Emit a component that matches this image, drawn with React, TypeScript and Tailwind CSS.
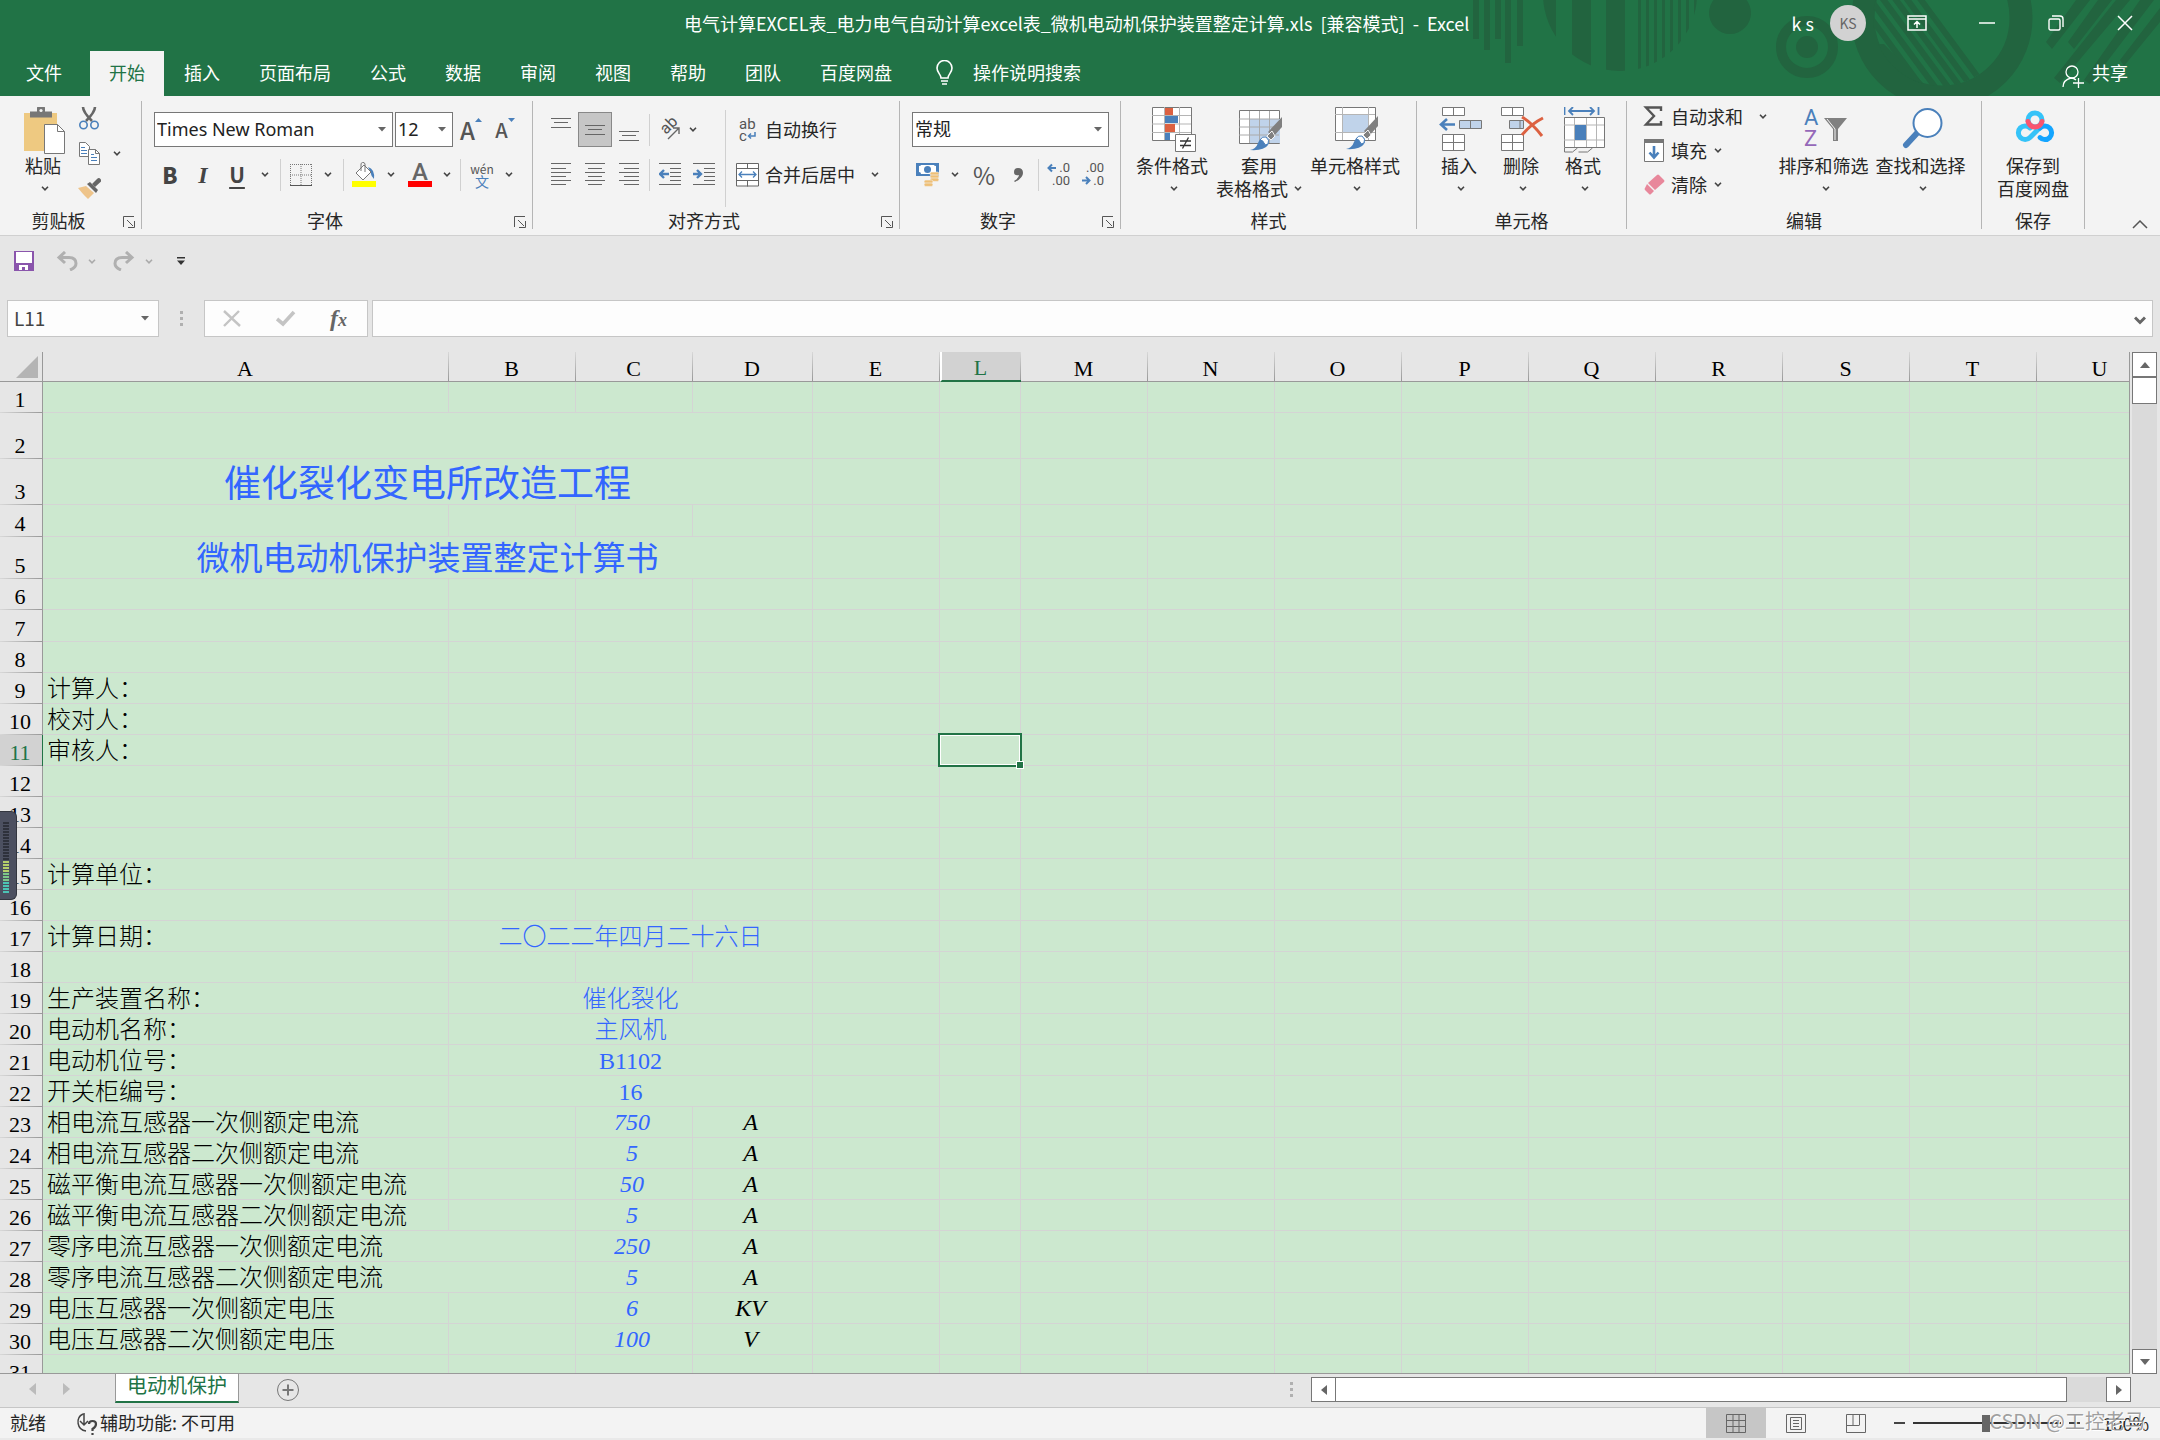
import type { ReactNode } from "react";
import clsx from "clsx";

type Cell = { span?: number; text?: string; className?: string };
type Row = { n: number; h: string; cells?: Cell[] };

const COLUMNS = [
  { name: "A", w: "w-[406px]" },
  { name: "B", w: "w-[127px]" },
  { name: "C", w: "w-[117px]" },
  { name: "D", w: "w-[120px]" },
  { name: "E", w: "w-[127px]" },
  { name: "L", w: "w-[81px]" },
  { name: "M", w: "w-[127px]" },
  { name: "N", w: "w-[127px]" },
  { name: "O", w: "w-[127px]" },
  { name: "P", w: "w-[127px]" },
  { name: "Q", w: "w-[127px]" },
  { name: "R", w: "w-[127px]" },
  { name: "S", w: "w-[127px]" },
  { name: "T", w: "w-[127px]" },
  { name: "U", w: "w-[127px]" },
];

const LABEL = "pl-1 pt-[2px] text-[24px]";
const MERGED = "pt-[2px] text-center text-[24px] text-[#3366ff]";
const VALUE = "pr-1 text-center text-[24px] text-[#3366ff] italic";
const UNIT = "pr-1 text-center text-[24px] italic";

const label = (text: string): Cell[] => [{ text, className: LABEL }];
const merged = (text: string, value: string): Cell[] => [
  { text, className: LABEL },
  { span: 3, text: value, className: MERGED },
];
const measure = (text: string, value: string, unit: string): Cell[] => [
  { text, className: LABEL },
  {},
  { text: value, className: VALUE },
  { text: unit, className: UNIT },
];
const measureWide = (text: string, value: string, unit: string): Cell[] => [
  { text, span: 2, className: LABEL },
  { text: value, className: VALUE },
  { text: unit, className: UNIT },
];

const ROWS: Row[] = [
  { n: 1, h: "h-[31px]" },
  { n: 2, h: "h-[46px]", cells: [{ span: 4 }] },
  {
    n: 3,
    h: "h-[46px]",
    cells: [
      {
        span: 4,
        text: "催化裂化变电所改造工程",
        className: "pt-[6px] text-center text-[37px] font-normal text-[#3366ff]",
      },
    ],
  },
  { n: 4, h: "h-[32px]" },
  {
    n: 5,
    h: "h-[42px]",
    cells: [
      {
        span: 4,
        text: "微机电动机保护装置整定计算书",
        className: "pt-[2px] text-center text-[33px] font-normal text-[#3366ff]",
      },
    ],
  },
  { n: 6, h: "h-[31px]" },
  { n: 7, h: "h-[32px]" },
  { n: 8, h: "h-[31px]" },
  { n: 9, h: "h-[31px]", cells: label("计算人：") },
  { n: 10, h: "h-[31px]", cells: label("校对人：") },
  { n: 11, h: "h-[31px]", cells: label("审核人：") },
  { n: 12, h: "h-[31px]" },
  { n: 13, h: "h-[31px]" },
  { n: 14, h: "h-[31px]" },
  { n: 15, h: "h-[31px]", cells: merged("计算单位：", "") },
  { n: 16, h: "h-[31px]" },
  { n: 17, h: "h-[31px]", cells: merged("计算日期：", "二〇二二年四月二十六日") },
  { n: 18, h: "h-[31px]" },
  { n: 19, h: "h-[31px]", cells: merged("生产装置名称：", "催化裂化") },
  { n: 20, h: "h-[31px]", cells: merged("电动机名称：", "主风机") },
  { n: 21, h: "h-[31px]", cells: merged("电动机位号：", "B1102") },
  { n: 22, h: "h-[31px]", cells: merged("开关柜编号：", "16") },
  { n: 23, h: "h-[31px]", cells: measure("相电流互感器一次侧额定电流", "750", "A") },
  { n: 24, h: "h-[31px]", cells: measure("相电流互感器二次侧额定电流", "5", "A") },
  { n: 25, h: "h-[31px]", cells: measure("磁平衡电流互感器一次侧额定电流", "50", "A") },
  { n: 26, h: "h-[31px]", cells: measure("磁平衡电流互感器二次侧额定电流", "5", "A") },
  { n: 27, h: "h-[31px]", cells: measureWide("零序电流互感器一次侧额定电流", "250", "A") },
  { n: 28, h: "h-[31px]", cells: measureWide("零序电流互感器二次侧额定电流", "5", "A") },
  { n: 29, h: "h-[31px]", cells: measure("电压互感器一次侧额定电压", "6", "KV") },
  { n: 30, h: "h-[31px]", cells: measure("电压互感器二次侧额定电压", "100", "V") },
  { n: 31, h: "h-[31px]" },
];

const TABS = ["文件", "开始", "插入", "页面布局", "公式", "数据", "审阅", "视图", "帮助", "团队", "百度网盘"];

function Chevron({ className = "text-[#444]" }: { className?: string }) {
  return (
    <svg width="8" height="5" viewBox="0 0 8 5" className={className} fill="none" stroke="currentColor" strokeWidth="1.6">
      <path d="M1 .8 4 3.8 7 .8" />
    </svg>
  );
}

function DropArrow() {
  return (
    <svg width="8" height="5" viewBox="0 0 8 5" fill="#666">
      <path d="M0 0h8L4 4.5z" />
    </svg>
  );
}

function ToolButton({ w, title, className, children }: { w: string; title: string; className?: string; children: ReactNode }) {
  return (
    <button type="button" aria-label={title} className={clsx("flex h-[35px] shrink-0 items-center justify-center", w, className)}>
      {children}
    </button>
  );
}

function Divider({ className = "mx-1" }: { className?: string }) {
  return <span className={clsx("h-8 w-px shrink-0 bg-[#d0d0d0]", className)} />;
}

function BigButton({ w, icon, lines, arrow = "below" }: { w: string; icon: ReactNode; lines: string[]; arrow?: "below" | "inline" | "none" }) {
  return (
    <button type="button" className={clsx("flex shrink-0 flex-col items-center leading-[23px] whitespace-nowrap", w)}>
      <span className="flex h-[47px] items-start justify-center pl-1">{icon}</span>
      {lines.map((line, i) => (
        <span key={line} className="flex items-center gap-[6px]">
          {line}
          {arrow === "inline" && i === lines.length - 1 && <Chevron />}
        </span>
      ))}
      {arrow === "below" && (
        <span className="flex h-[23px] items-center pl-1">
          <Chevron />
        </span>
      )}
    </button>
  );
}

function Group({ w, name, launcher, children }: { w: string; name: string; launcher?: boolean; children: ReactNode }) {
  return (
    <section className={clsx("flex shrink-0 flex-col border-r border-[#b5b5b5]", w)}>
      <div className="flex h-[110px]">{children}</div>
      <div className="flex h-[18px] items-center">
        <span className="flex-1 text-center leading-[18px]">{name}</span>
        {launcher && (
          <button type="button" aria-label={`${name}设置`} className="flex w-6 justify-center pt-1">
            <svg width="12" height="12" viewBox="0 0 12 12" fill="none" stroke="#555">
              <path d="M.5 11V.5H11M4 4l6 6M11.5 5v6.5H5" />
            </svg>
          </button>
        )}
      </div>
    </section>
  );
}

function SelectBox({ w, title, value }: { w: string; title: string; value: string }) {
  return (
    <div className={clsx("relative h-[35px] shrink-0", w)}>
      <select
        aria-label={title}
        defaultValue={value}
        className="h-full w-full appearance-none border border-[#777] bg-white pl-[2px] font-['Noto_Sans','Noto_Sans_CJK_SC',sans-serif] text-[18px] text-[#222]"
      >
        <option>{value}</option>
      </select>
      <span className="pointer-events-none absolute top-[15px] right-[7px]">
        <DropArrow />
      </span>
    </div>
  );
}

/* ---------- title bar artwork ---------- */

function HeaderArt() {
  return (
    <svg className="pointer-events-none absolute top-0 right-0" width="700" height="96" viewBox="1460 0 700 96" fill="#22643f">
      <defs>
        <clipPath id="disc">
          <circle cx="1620" cy="-6" r="77" />
        </clipPath>
        <clipPath id="lens">
          <circle cx="1941" cy="18" r="68" />
        </clipPath>
      </defs>
      <path d="M1473 0h6v39h-6zM1484 0h6v50h-6zM1495 0h6v39h-6zM1505 0h6v63h-6zM1517 0h6v46h-6z" />
      <path
        clipPath="url(#disc)"
        d="M1542 0h14v80h-14zM1572 0h19v80h-19zM1606 0h19v80h-19zM1638 0h3v80h-3zM1646 0h3v80h-3zM1654 0h3v80h-3zM1662 0h3v80h-3zM1670 0h3v80h-3zM1678 0h3v80h-3zM1686 0h3v80h-3zM1694 0h3v80h-3z"
      />
      <circle cx="1730" cy="13" r="21" />
      <circle cx="1807" cy="47" r="26" fill="none" stroke="#22643f" strokeWidth="10" />
      <circle cx="1807" cy="47" r="11" />
      <circle cx="1942" cy="18" r="79" fill="none" stroke="#22643f" strokeWidth="23" />
      <g clipPath="url(#lens)" stroke="#22643f" strokeWidth="6">
        <path d="M1862 6l78 106M1862-12l90 122M1866-24l96 130M1874-30l98 133M1884-32l98 133M1896-34l98 133" />
        <path d="M1870 44l14 0 50 50-30 6z" strokeWidth="0" />
      </g>
      <path d="M2046 42l30-42h14l-38 49zM2068 42l30-42h14l-38 49zM2054 78l62-78h14l-70 83zM2084 80l56-80h14l-64 84zM2120 60l40-52v14l-36 44z" />
    </svg>
  );
}

/* ---------- ribbon icons ---------- */

function PasteIcon() {
  return (
    <svg width="42" height="48" viewBox="0 0 42 48">
      <path d="M0 6h33v38H0z" fill="#eec981" />
      <path d="M6 5h7V2a4 4 0 0 1 8 0v3h7v6H6z" fill="#777" transform="translate(0 -.5)" />
      <circle cx="17" cy="3.500" r="1.600" fill="#f3f3f3" />
      <path d="M20.500 17.500h13l7 7v22h-20z" fill="#fff" stroke="#777" />
      <path d="M33.500 17.500v7h7" fill="none" stroke="#777" />
    </svg>
  );
}

function ScissorsIcon() {
  return (
    <svg width="20" height="23" viewBox="0 0 20 23" fill="none">
      <path d="M4 0c0 4 3 8 9 14M16 0c0 4-3 8-9 14" stroke="#666" strokeWidth="2.600" />
      <circle cx="4.500" cy="18" r="3.700" stroke="#4a80bb" strokeWidth="1.600" />
      <circle cx="15.500" cy="18" r="3.700" stroke="#4a80bb" strokeWidth="1.600" />
    </svg>
  );
}

function CopyIcon() {
  return (
    <svg width="21" height="23" viewBox="0 0 21 23" fill="#fff" stroke="#777">
      <path d="M.5.500h6l4 4v10H.500z" />
      <path d="M2 5.500h4M2 8.500h6M2 11.500h6" stroke="#4a80bb" />
      <path d="M9.500 7.500h7l4 4v11h-11z" />
      <path d="M16.500 7.500v4h4" fill="none" />
      <path d="M12 12.500h3M12 15.500h6M12 18.500h6" stroke="#4a80bb" />
    </svg>
  );
}

function PainterIcon() {
  return (
    <svg width="23" height="21" viewBox="0 0 23 21">
      <path d="M0 10l8-2 8 7-6 6C6 17 3 14 0 10z" fill="#eec48a" />
      <path d="M9 6l3-2 8 8-2 3z" fill="#666" />
      <path d="M14 6l5-5q2-2 3.500 0t0 3l-5.500 5z" fill="#666" />
    </svg>
  );
}

function BordersIcon() {
  return (
    <svg width="22" height="22" viewBox="0 0 22 22" fill="none" stroke="#777">
      <path d="M.5 0v21M21.500 0v21M0 .5h22M11 0v21M0 11h22" strokeDasharray="1 1" />
      <path d="M0 21.500h22" stroke="#555" />
    </svg>
  );
}

function FillIcon() {
  return (
    <svg width="24" height="25" viewBox="0 0 24 25" fill="none">
      <path d="M16 5q7 2 6 12-3-3-4-8z" fill="#4a80bb" />
      <path d="M4 11 12 3l7 7-8 8z" fill="#fff" stroke="#777" />
      <path d="M9 9V3a2 2 0 0 1 4-1v8" stroke="#777" />
      <path d="M0 19h24v6H0z" fill="#ff0" />
    </svg>
  );
}

function LinesIcon({ rows, className }: { rows: [number, number, number][]; className?: string }) {
  return (
    <svg width="20" height="23" viewBox="0 0 20 23" className={className} fill="#666">
      {rows.map(([x, y, w]) => (
        <rect key={y} x={x} y={y} width={w} height="1" />
      ))}
    </svg>
  );
}

function IndentIcon({ flip }: { flip?: boolean }) {
  return (
    <svg width="22" height="23" viewBox="0 0 22 23">
      <path d="M0 0h22v1H0zM11 5h11v1H11zM11 9h11v1H11zM11 13h11v1H11zM11 17h11v1H11zM0 21h22v1H0z" fill="#666" />
      <path
        d={flip ? "M0 11h8M4 7l4 4-4 4" : "M10 11H1M5 7l-4 4 4 4"}
        fill="none"
        stroke="#4a80bb"
        strokeWidth="2.400"
      />
    </svg>
  );
}

function MergeIcon() {
  return (
    <svg width="23" height="24" viewBox="0 0 23 24" fill="none" stroke="#666">
      <path d="M.5.500h22v22.500H.500z" fill="#fff" />
      <path d="M0 5.500h23M0 17.500h23M11.500 0v5.500M11.500 17.500v6" />
      <path d="M3 11.500h17M6 8.500l-3 3 3 3M17 8.500l3 3-3 3" stroke="#4a80bb" strokeWidth="1.300" />
    </svg>
  );
}

function MoneyIcon() {
  return (
    <svg width="24" height="25" viewBox="0 0 24 25">
      <path d="M0 1h23v13H0z" fill="#4a80bb" />
      <path d="M3 4q2 0 2-1h13q0 1 2 1v6q-2 0-2 2H5q0-2-2-2z" fill="#fff" />
      <circle cx="11.500" cy="7.500" r="3.500" fill="#4a80bb" />
      <g fill="#eebf76" stroke="#f3f3f3" strokeWidth=".6">
        <rect x="14" y="10" width="9" height="3.400" rx="1.700" />
        <rect x="14" y="13" width="9" height="3.400" rx="1.700" />
        <rect x="14" y="16" width="9" height="3.400" rx="1.700" />
        <rect x="8" y="18" width="9" height="3.400" rx="1.700" />
        <rect x="8" y="21" width="9" height="3.400" rx="1.700" />
      </g>
    </svg>
  );
}

function DecimalIcon({ top, bottom, dir }: { top: string; bottom: string; dir: "left" | "right" }) {
  return (
    <svg width="24" height="25" viewBox="0 0 24 25" className="overflow-visible" fill="#555" fontFamily="Roboto" fontSize="13">
      <text x="23" y="10" textAnchor="end">{top}</text>
      <text x="23" y="23" textAnchor="end">{bottom}</text>
      {dir === "left" ? (
        <path d="M9 6H2M5 2.500 1.500 6 5 9.500" fill="none" stroke="#4a80bb" strokeWidth="2" />
      ) : (
        <path d="M1 18.500h7M5 15l3.500 3.500L5 22" fill="none" stroke="#4a80bb" strokeWidth="2" />
      )}
    </svg>
  );
}

function Brush() {
  return (
    <g>
      <path d="M43 10v10l-9 10-5-5z" fill="#808080" />
      <path d="M33 24l3 5-4 4-4-4z" fill="#808080" stroke="#f3f3f3" />
      <path d="M11 43q6-1 8-7t8-6q5 3 2 8-4 6-18 5z" fill="#4a80bb" />
      <path d="M21 33q2-4 6-3 4 3 2 7-3 2-4-1t-4-3z" fill="#fff" stroke="#4a80bb" />
    </g>
  );
}

function ConditionalIcon() {
  return (
    <svg width="44" height="46" viewBox="0 0 44 46">
      <path d="M.5.500h39v33H.500z" fill="#fff" stroke="#777" />
      <path d="M12.500 0v33M27.500 0v33M0 8.500h39M0 17h39M0 25.500h39" stroke="#b5b5b5" />
      <path d="M13 1h8v7h-8zM13 17h10v8H13z" fill="#dc6141" />
      <path d="M13 9h13v7H13zM13 26h5v7h-5z" fill="#4a80bb" />
      <path d="M23.500 27.500h20v17h-20z" fill="#fff" stroke="#777" />
      <path d="M28 34h11M28 38.500h11M36.500 30.500l-6 11" stroke="#333" strokeWidth="1.300" />
    </svg>
  );
}

function TableStyleIcon() {
  return (
    <svg width="44" height="46" viewBox="0 0 44 46">
      <path d="M.5 3.500h40v33H.500z" fill="#fff" stroke="#777" />
      <path d="M11 12h30v24H11z" fill="#c0d3ea" />
      <path d="M10.500 4v32M20.500 4v32M30.500 4v32M0 12h40M0 20h40M0 28h40" stroke="#aaa" fill="none" />
      <Brush />
    </svg>
  );
}

function CellStyleIcon() {
  return (
    <svg width="44" height="46" viewBox="0 0 44 46">
      <path d="M.5.500h40v33H.500z" fill="#fff" stroke="#777" />
      <path d="M7.500 0v33M33.500 0v33M0 7.500h40M0 25.500h40" stroke="#b5b5b5" />
      <path d="M8 8h25v17H8z" fill="#c0d3ea" />
      <g transform="translate(0 -1)">
        <Brush />
      </g>
    </svg>
  );
}

function InsertIcon() {
  return (
    <svg width="44" height="46" viewBox="0 0 44 46" fill="#fff" stroke="#777">
      <path d="M3.500.500h22v8h-22zM14.500 0v8M3.500 27.500h22v16h-22zM14.500 27v16M3 35.500h22" />
      <path d="M20.500 13.500h22v8h-22zM31.500 13v8" fill="#c0d3ea" />
      <path d="M16 17.500H3M8 12l-6 5.500L8 23" fill="none" stroke="#4a80bb" strokeWidth="2.600" />
    </svg>
  );
}

function DeleteIcon() {
  return (
    <svg width="44" height="46" viewBox="0 0 44 46" fill="#fff" stroke="#777">
      <path d="M.5.500h22v8H.500zM11.500 0v8M.5 27.500h22v16H.500zM11.500 27v16M0 35.500h22" />
      <path d="M8.500 13.500h14v8h-14zM19 13v8" fill="#c0d3ea" />
      <path d="M21 10q10 6 20 19M42 11Q30 17 21 28" fill="none" stroke="#dc6141" strokeWidth="3" />
    </svg>
  );
}

function FormatIcon() {
  return (
    <svg width="42" height="48" viewBox="0 0 42 48" fill="none">
      <path d="M.5 0v8M34.500 0v8M5 4h25M9 0 5 4l4 4M26 0l4 4-4 4" stroke="#4a80bb" strokeWidth="1.800" />
      <path d="M.5 10.500h40v30H.500z" fill="#fff" stroke="#777" />
      <path d="M10.500 11v29M22.500 11v29M32.500 11v29M0 18h40M0 33h40" stroke="#b5b5b5" />
      <path d="M11 18h11v15H11z" fill="#4a80bb" />
      <path d="M.5 41v4h8l5-4M14.500 45h9l5-4" stroke="#777" />
    </svg>
  );
}

function SortFilterIcon() {
  return (
    <svg width="44" height="46" viewBox="0 0 44 46" className="overflow-visible">
      <text x="0" y="18" fontSize="22" fontFamily="Roboto" fill="#4a80bb">A</text>
      <text x="0" y="39" fontSize="22" fontFamily="Roboto" fill="#9568b8">Z</text>
      <path d="M20 11h23L34 22v12h-5V22z" fill="#808080" />
      <path d="M23 12l8 10v11" fill="none" stroke="#f3f3f3" />
    </svg>
  );
}

function FindIcon() {
  return (
    <svg width="42" height="46" viewBox="0 0 42 46">
      <path d="M16 25 4 38" stroke="#4a80bb" strokeWidth="6" strokeLinecap="round" />
      <circle cx="25.500" cy="16" r="14" fill="#fff" stroke="#4a80bb" strokeWidth="2" />
    </svg>
  );
}

function CloudIcon() {
  return (
    <svg width="40" height="46" viewBox="0 0 40 46" fill="none" strokeWidth="5" strokeLinecap="round">
      <path d="M27 18.500 15 30.500a6.800 6.800 0 1 1 0-9.600" stroke="#35c3f8" />
      <path d="M25 21a6.800 6.800 0 1 1 0 9.600" stroke="#14a5ff" />
      <circle cx="20" cy="13" r="7" stroke="#35c3f8" />
      <path d="M13 14.500a7.200 7.200 0 0 0 14 0" stroke="#f9556f" />
    </svg>
  );
}

function SmallAction({ icon, text, gap }: { icon: ReactNode; text: string; gap: string }) {
  return (
    <button type="button" className="flex h-[34px] items-center pb-1 whitespace-nowrap">
      <span className="flex w-7 justify-start">{icon}</span>
      {text}
      <span className={gap}>
        <Chevron />
      </span>
    </button>
  );
}

/* ---------- page sections ---------- */

function TitleBar() {
  return (
    <header className="relative h-24 shrink-0 bg-[#217346] text-white">
      <HeaderArt />
      <div className="relative flex h-[51px] items-center">
        <h1 className="flex-1 pb-[6px] pl-[684px] text-[18px] leading-6 whitespace-pre">
          电气计算EXCEL表_电力电气自动计算excel表_微机电动机保护装置整定计算.xls  [兼容模式]  -  Excel
        </h1>
        <div className="flex items-center pb-[5px]">
          <span className="text-[18px] whitespace-pre">k s</span>
          <span className="ml-4 flex size-9 items-center justify-center rounded-full bg-[#d2d2d2] text-[14px] text-[#666]">KS</span>
          <button type="button" aria-label="功能区显示选项" className="ml-[41px]">
            <svg width="20" height="16" viewBox="0 0 20 16" fill="none" stroke="#fff" strokeWidth="1.500">
              <path d="M1 1h18v14H1zM1 4h18M10 13V6.500M7 9.500l3-3 3 3" />
            </svg>
          </button>
          <button type="button" aria-label="最小化" className="ml-[52px]">
            <svg width="16" height="16" viewBox="0 0 16 16" stroke="#fff" strokeWidth="1.500">
              <path d="M0 8h16" />
            </svg>
          </button>
          <button type="button" aria-label="向下还原" className="ml-[53px]">
            <svg width="16" height="16" viewBox="0 0 16 16" fill="none" stroke="#fff" strokeWidth="1.400">
              <rect x="1" y="4" width="11" height="11" rx="1.500" />
              <path d="M4 1h8q3 0 3 3v8" />
            </svg>
          </button>
          <button type="button" aria-label="关闭" className="mr-[27px] ml-[53px]">
            <svg width="16" height="16" viewBox="0 0 16 16" stroke="#fff" strokeWidth="1.500">
              <path d="M1 1l14 14M15 1 1 15" />
            </svg>
          </button>
        </div>
      </div>
      <nav className="relative flex h-[45px] gap-px pl-[7px] text-[18px]">
        {TABS.map((tab, i) => (
          <button
            key={tab}
            type="button"
            className={clsx(
              "h-full px-[19px] pb-[2px] whitespace-nowrap",
              i === 0 && "mr-2",
              tab === "开始" && "bg-[#f3f3f3] text-[#217346]"
            )}
          >
            {tab}
          </button>
        ))}
        <button type="button" className="ml-6 flex items-center gap-5 pb-[2px] whitespace-nowrap">
          <svg width="17" height="25" viewBox="0 0 17 25" fill="none" stroke="#fff" strokeWidth="1.600">
            <path d="M5 18c0-4-4-5-4-10a7.500 7.500 0 0 1 15 0c0 5-4 6-4 10zM5 21h7M6 24h5" />
          </svg>
          操作说明搜索
        </button>
        <button type="button" className="mr-8 ml-auto flex items-center gap-2 pb-[2px]">
          <svg width="22" height="23" viewBox="0 0 22 23" fill="none" stroke="#fff" strokeWidth="1.300" className="mt-2">
            <circle cx="10" cy="7" r="6" />
            <path d="M1 22c0-6 4-8 8-9 3 0 4 1 5 2M16.500 13v10M11 18h11" />
          </svg>
          共享
        </button>
      </nav>
    </header>
  );
}

function Ribbon() {
  return (
    <div className="flex h-[140px] shrink-0 overflow-hidden border-b border-[#d0d0d0] bg-[#f3f3f3] pt-[5px] pb-[6px] text-[18px] text-[#262626]">
      <Group w="w-[142px]" name="剪贴板" launcher>
        <div className="flex pt-[6px] pl-[15px]">
          <BigButton w="w-[56px]" icon={<PasteIcon />} lines={["粘贴"]} />
        </div>
        <div className="flex flex-col pl-[6px]">
          <ToolButton w="w-6" title="剪切">
            <ScissorsIcon />
          </ToolButton>
          <div className="flex items-center gap-3">
            <ToolButton w="w-6" title="复制">
              <CopyIcon />
            </ToolButton>
            <Chevron />
          </div>
          <ToolButton w="w-6" title="格式刷">
            <PainterIcon />
          </ToolButton>
        </div>
      </Group>

      <Group w="w-[391px]" name="字体" launcher>
        <div className="flex flex-col gap-[10px] pt-[11px] pl-3">
          <div className="flex gap-[2px]">
            <SelectBox w="w-[239px]" title="字体" value="Times New Roman" />
            <SelectBox w="w-[58px]" title="字号" value="12" />
            <ToolButton w="w-8" title="增大字号" className="text-[24px] font-medium text-[#555]">
              A<svg width="7" height="4" className="mb-5"><path d="M0 4h7L3.500 0z" fill="#4a80bb" /></svg>
            </ToolButton>
            <ToolButton w="w-8" title="减小字号" className="text-[20px] font-medium text-[#555]">
              A<svg width="7" height="4" className="mb-5"><path d="M0 0h7L3.500 4z" fill="#4a80bb" /></svg>
            </ToolButton>
          </div>
          <div className="flex items-center text-[#444]">
            <ToolButton w="w-8" title="加粗" className="text-[22px] font-black">B</ToolButton>
            <ToolButton w="w-[34px]" title="倾斜" className="font-['Liberation_Serif',serif] text-[24px] font-bold italic">I</ToolButton>
            <ToolButton w="w-[34px]" title="下划线" className="text-[21px] font-bold underline underline-offset-4">U</ToolButton>
            <ToolButton w="w-[22px]" title="下划线选项"><Chevron /></ToolButton>
            <Divider />
            <ToolButton w="w-8" title="边框"><BordersIcon /></ToolButton>
            <ToolButton w="w-[22px]" title="边框选项"><Chevron /></ToolButton>
            <Divider />
            <ToolButton w="w-8" title="填充颜色"><FillIcon /></ToolButton>
            <ToolButton w="w-[22px]" title="填充颜色选项"><Chevron /></ToolButton>
            <ToolButton w="w-9" title="字体颜色">
              <svg width="24" height="25" viewBox="0 0 24 25" className="overflow-visible">
                <text x="12" y="18" textAnchor="middle" fontSize="24" fontWeight="500" fontFamily="Roboto" fill="#666">A</text>
                <path d="M0 19h24v6H0z" fill="red" />
              </svg>
            </ToolButton>
            <ToolButton w="w-[18px]" title="字体颜色选项"><Chevron /></ToolButton>
            <Divider />
            <ToolButton w="w-[34px]" title="显示或隐藏拼音字段">
              <span className="flex flex-col items-center leading-3">
                <span className="text-[12px] text-[#555]">wén</span>
                <span className="text-[14px] text-[#4a80bb]">文</span>
              </span>
            </ToolButton>
            <ToolButton w="w-5" title="拼音选项"><Chevron /></ToolButton>
          </div>
        </div>
      </Group>

      <Group w="w-[367px]" name="对齐方式" launcher>
        <div className="flex flex-col gap-[10px] pt-[11px] pl-[11px]">
          <div className="flex items-center">
            <ToolButton w="w-[34px]" title="顶端对齐">
              <LinesIcon rows={[[0, 0, 20], [3, 4, 14], [0, 9, 20]]} />
            </ToolButton>
            <ToolButton w="w-[34px]" title="垂直居中" className="border border-[#888] bg-[#c6c6c6]">
              <LinesIcon rows={[[0, 7, 20], [3, 11, 14], [0, 16, 20]]} />
            </ToolButton>
            <ToolButton w="w-[34px]" title="底端对齐">
              <LinesIcon rows={[[0, 13, 20], [3, 17, 14], [0, 22, 20]]} />
            </ToolButton>
            <Divider className="mx-[3px]" />
            <ToolButton w="w-[34px]" title="方向">
              <svg width="22" height="24" viewBox="0 0 22 24" className="overflow-visible">
                <text x="0" y="0" fontSize="16" fontFamily="Roboto" fill="#555" transform="translate(7 17) rotate(-45)">ab</text>
                <path d="M9 21 20 10M14 10h6v6" fill="none" stroke="#666" strokeWidth="1.400" />
              </svg>
            </ToolButton>
            <ToolButton w="w-3" title="方向选项"><Chevron /></ToolButton>
          </div>
          <div className="flex items-center">
            <ToolButton w="w-[34px]" title="左对齐">
              <LinesIcon rows={[[0, 0, 20], [0, 5, 15], [0, 9, 20], [0, 13, 15], [0, 17, 20], [0, 21, 15]]} />
            </ToolButton>
            <ToolButton w="w-[34px]" title="居中">
              <LinesIcon rows={[[0, 0, 20], [3, 5, 14], [0, 9, 20], [3, 13, 14], [0, 17, 20], [3, 21, 14]]} />
            </ToolButton>
            <ToolButton w="w-[34px]" title="右对齐">
              <LinesIcon rows={[[0, 0, 20], [5, 5, 15], [0, 9, 20], [5, 13, 15], [0, 17, 20], [5, 21, 15]]} />
            </ToolButton>
            <Divider className="mx-[3px]" />
            <ToolButton w="w-[34px]" title="减少缩进量"><IndentIcon /></ToolButton>
            <ToolButton w="w-[34px]" title="增加缩进量"><IndentIcon flip /></ToolButton>
          </div>
        </div>
        <span className="mt-[9px] ml-1 h-[97px] w-px bg-[#d0d0d0]" />
        <div className="flex flex-col gap-[10px] pt-[11px] pl-[10px]">
          <button type="button" className="flex h-[35px] items-center gap-[6px]">
            <svg width="23" height="24" viewBox="0 0 23 24" className="overflow-visible" fill="#555" fontFamily="Roboto" fontSize="15">
              <text x="3" y="11">ab</text>
              <text x="3" y="23">c</text>
              <path d="M19 14v4h-6M15 15.500 12.500 18l2.500 2.500" fill="none" stroke="#4a80bb" strokeWidth="1.500" />
            </svg>
            自动换行
          </button>
          <button type="button" className="flex h-[35px] items-center gap-[6px] whitespace-nowrap">
            <MergeIcon />
            合并后居中
            <span className="ml-[10px]"><Chevron /></span>
          </button>
        </div>
      </Group>

      <Group w="w-[221px]" name="数字" launcher>
        <div className="flex flex-col gap-[10px] pt-[11px] pl-3">
          <SelectBox w="w-[197px]" title="数字格式" value="常规" />
          <div className="flex items-center text-[#555]">
            <ToolButton w="w-8" title="会计数字格式"><MoneyIcon /></ToolButton>
            <ToolButton w="w-[22px]" title="会计数字格式选项"><Chevron /></ToolButton>
            <ToolButton w="w-9" title="百分比样式" className="text-[24px]">%</ToolButton>
            <ToolButton w="w-8" title="千位分隔样式">
              <svg width="9" height="14" viewBox="0 0 9 14" fill="#666">
                <path d="M4 0q5 0 5 5t-8 9l-1-1q5-3 5-6-5 1-5-3 0-4 4-4z" />
              </svg>
            </ToolButton>
            <Divider />
            <ToolButton w="w-8" title="增加小数位数"><DecimalIcon top=".0" bottom=".00" dir="left" /></ToolButton>
            <ToolButton w="w-9" title="减少小数位数"><DecimalIcon top=".00" bottom=".0" dir="right" /></ToolButton>
          </div>
        </div>
      </Group>

      <Group w="w-[296px]" name="样式">
        <div className="flex items-start pt-[6px] pl-[9px]">
          <BigButton w="w-[84px]" icon={<ConditionalIcon />} lines={["条件格式"]} />
          <BigButton w="w-[90px]" icon={<TableStyleIcon />} lines={["套用", "表格格式"]} arrow="inline" />
          <BigButton w="w-[102px]" icon={<CellStyleIcon />} lines={["单元格样式"]} />
        </div>
      </Group>

      <Group w="w-[210px]" name="单元格">
        <div className="flex items-start pt-[6px] pl-[11px]">
          <BigButton w="w-[62px]" icon={<InsertIcon />} lines={["插入"]} />
          <BigButton w="w-[62px]" icon={<DeleteIcon />} lines={["删除"]} />
          <BigButton w="w-[62px]" icon={<FormatIcon />} lines={["格式"]} />
        </div>
      </Group>

      <Group w="w-[355px]" name="编辑">
        <div className="flex w-[148px] flex-col pl-4">
          <SmallAction
            text="自动求和"
            gap="ml-4"
            icon={
              <svg width="20" height="20" viewBox="0 0 20 20" fill="none" stroke="#555" strokeWidth="2.400">
                <path d="M18 5V1.500H3l8 8.500-8 8.500h15V15" />
              </svg>
            }
          />
          <SmallAction
            text="填充"
            gap="ml-[7px]"
            icon={
              <svg width="22" height="23" viewBox="0 0 22 23" fill="none">
                <path d="M1.500.500h19v22h-19z" fill="#fff" stroke="#777" />
                <path d="M1 0h20v4H1z" fill="#777" />
                <path d="M11 7v11M6.500 13.500 11 18.500l4.500-5" stroke="#4a80bb" strokeWidth="2.600" />
              </svg>
            }
          />
          <SmallAction
            text="清除"
            gap="ml-[7px]"
            icon={
              <svg width="22" height="21" viewBox="0 0 22 21" fill="#e8879b">
                <path d="M14 1q1-1 2 0l5 5q1 1 0 2l-9 8-7-7zM4 10l7 7-3 3q-1 1-2 0l-4-4q-1-1 0-2z" />
              </svg>
            }
          />
        </div>
        <div className="flex items-start pt-[6px]">
          <BigButton w="w-[97px]" icon={<SortFilterIcon />} lines={["排序和筛选"]} />
          <BigButton w="w-[97px]" icon={<FindIcon />} lines={["查找和选择"]} />
        </div>
      </Group>

      <Group w="w-[103px]" name="保存">
        <div className="flex flex-1 items-start justify-center pt-[6px]">
          <BigButton w="w-24" icon={<CloudIcon />} lines={["保存到", "百度网盘"]} arrow="none" />
        </div>
      </Group>

      <button type="button" aria-label="折叠功能区" className="mr-3 ml-auto self-end">
        <svg width="16" height="9" viewBox="0 0 16 9" fill="none" stroke="#555" strokeWidth="1.500">
          <path d="M1 8l7-7 7 7" />
        </svg>
      </button>
    </div>
  );
}

function QuickAccess() {
  return (
    <div className="flex h-16 shrink-0 items-center pb-[14px] pl-[14px]">
      <button type="button" aria-label="保存">
        <svg width="20" height="20" viewBox="0 0 20 20">
          <path d="M0 0h20v20H0z" fill="#8a55ac" />
          <path d="M2 1h16v11H2zM5 14h9v5h-3v-3H8v3H5z" fill="#fff" />
        </svg>
      </button>
      <button type="button" aria-label="撤消" className="ml-[22px]">
        <svg width="22" height="20" viewBox="0 0 22 20" fill="none" stroke="#b0b0b0" strokeWidth="3">
          <path d="M9 1 3 6.500 9 12M3 6.500h10q7 0 7 6 0 4-6 6.500" />
        </svg>
      </button>
      <button type="button" aria-label="撤消选项" className="ml-[10px]"><Chevron className="text-[#aaa]" /></button>
      <button type="button" aria-label="恢复" className="ml-[17px]">
        <svg width="22" height="20" viewBox="0 0 22 20" fill="none" stroke="#b0b0b0" strokeWidth="3">
          <path d="M13 1l6 5.500-6 5.500M19 6.500H9q-7 0-7 6 0 4 6 6.500" />
        </svg>
      </button>
      <button type="button" aria-label="恢复选项" className="ml-[10px]"><Chevron className="text-[#aaa]" /></button>
      <button type="button" aria-label="自定义快速访问工具栏" className="ml-6">
        <svg width="8" height="8" viewBox="0 0 8 8" fill="#333">
          <path d="M0 0h8v1.500H0zM0 3.500h8L4 8z" />
        </svg>
      </button>
    </div>
  );
}

function FormulaBar() {
  return (
    <div className="flex h-[37px] shrink-0 pr-[7px] pl-[7px]">
      <div className="relative w-[152px] shrink-0">
        <input
          aria-label="名称框"
          defaultValue="L11"
          className="h-full w-full border border-[#c6c6c6] bg-[#fdfdfd] pb-[2px] pl-[6px] font-['Noto_Sans_CJK_SC',sans-serif] text-[19px] text-[#444]"
        />
        <span className="pointer-events-none absolute top-4 right-[10px]"><DropArrow /></span>
      </div>
      <div className="flex w-[45px] shrink-0 flex-col items-center justify-center gap-[3px]">
        <i className="size-[3px] bg-[#b0b0b0]" />
        <i className="size-[3px] bg-[#b0b0b0]" />
        <i className="size-[3px] bg-[#b0b0b0]" />
      </div>
      <div className="flex w-[164px] shrink-0 items-center justify-between border border-[#c6c6c6] bg-[#fdfdfd] pr-5 pl-[18px]">
        <button type="button" aria-label="取消">
          <svg width="18" height="17" viewBox="0 0 18 17" fill="none" stroke="#c4c4c4" strokeWidth="2.400">
            <path d="M1 1l16 15M16 1 1 16" />
          </svg>
        </button>
        <button type="button" aria-label="输入">
          <svg width="20" height="17" viewBox="0 0 20 17" fill="none" stroke="#c4c4c4" strokeWidth="3.600">
            <path d="M1 9l6 5L18 2" />
          </svg>
        </button>
        <button type="button" aria-label="插入函数" className="font-['Liberation_Serif',serif] text-[24px] leading-6 font-bold text-[#666] italic">
          f<span className="text-[18px]">x</span>
        </button>
      </div>
      <div className="relative ml-1 min-w-0 flex-1">
        <input aria-label="编辑栏" className="h-full w-full border border-[#c6c6c6] bg-[#fdfdfd] px-2" />
        <span className="pointer-events-none absolute top-4 right-[7px]">
          <svg width="12" height="9" viewBox="0 0 12 9" fill="none" stroke="#666" strokeWidth="3">
            <path d="M1 1.500l5 5 5-5" />
          </svg>
        </span>
      </div>
    </div>
  );
}

function SheetRow({ row }: { row: Row }) {
  const given = row.cells ?? [];
  const used = given.reduce((sum, c) => sum + (c.span ?? 1), 0);
  const cells: Cell[] = [...given, ...Array.from({ length: COLUMNS.length - used }, () => ({}))];
  const active = row.n === 11;
  let col = 0;

  return (
    <tr className={row.h}>
      <th
        scope="row"
        className={clsx(
          "border-r bg-[linear-gradient(to_right,#d8d8d8,#999)] bg-[length:100%_1px] bg-bottom bg-no-repeat pr-[2px] align-bottom text-[22px] leading-[27px] font-normal",
          active ? "border-[#217346] bg-[#d2d2d2] text-[#217346]" : "border-[#999] bg-[#e6e6e6]"
        )}
      >
        {row.n}
      </th>
      {cells.map((cell, i) => {
        const name = COLUMNS[col].name;
        col += cell.span ?? 1;
        return (
          <td
            key={i}
            colSpan={cell.span}
            className={clsx(
              "relative border-r border-b border-[#d4d4d4] align-middle leading-7 whitespace-nowrap",
              cell.className
            )}
          >
            {cell.text}
            {active && name === "L" && (
              <span className="absolute -inset-[2px] z-10 border-2 border-[#217346] shadow-[inset_0_0_0_1px_#fff]">
                <i className="absolute -right-[4px] -bottom-[4px] size-2 border border-white bg-[#217346]" />
              </span>
            )}
          </td>
        );
      })}
    </tr>
  );
}

function ScrollButton({ d, title }: { d: string; title: string }) {
  return (
    <button type="button" aria-label={title} className="flex size-[25px] shrink-0 items-center justify-center border border-[#777] bg-white">
      <svg width="12" height="12" viewBox="0 0 12 12" fill="#666">
        <path d={d} />
      </svg>
    </button>
  );
}

function LevelMeter() {
  return (
    <div className="absolute top-[459px] left-0 z-20 flex h-[89px] w-[17px] flex-col gap-px rounded-r-md border border-l-0 border-[#33363f] bg-[#4c5060] pt-[10px] pl-[3px]">
      {Array.from({ length: 24 }, (_, i) => (
        <i
          key={i}
          className={clsx("h-[2px] w-[6px]", i < 13 ? "bg-[#2e313b]" : i < 17 ? "bg-[#b5cf6a]" : i < 20 ? "bg-[#7cc688]" : "bg-[#4cc3b4]")}
        />
      ))}
    </div>
  );
}

function Sheet() {
  return (
    <div className="relative mt-[15px] flex min-h-0 flex-1">
      <div className="min-w-0 flex-1 overflow-hidden border-r border-b border-[#999] bg-[#cce8cf]">
        <table className="w-max table-fixed border-separate border-spacing-0 font-['Liberation_Serif','Noto_Sans_CJK_SC',serif] font-light text-black">
          <colgroup>
            <col className="w-[43px]" />
            {COLUMNS.map((c) => (
              <col key={c.name} className={c.w} />
            ))}
          </colgroup>
          <thead>
            <tr className="h-[30px]">
              <th className="border-r border-b border-[#999] bg-[#e6e6e6]">
                <svg width="22" height="22" viewBox="0 0 22 22" className="ml-4" fill="#b4b4b4">
                  <path d="M22 0v22H0z" />
                </svg>
              </th>
              {COLUMNS.map((c) => (
                <th
                  key={c.name}
                  scope="col"
                  className={clsx(
                    "pt-1 pr-[2px] text-[22px] leading-6 font-normal",
                    c.name === "L"
                      ? "border-b-2 border-l-2 border-b-[#217346] border-l-white bg-[#d2d2d2] text-[#217346]"
                      : "border-b border-[#999] bg-[#e6e6e6]",
                    "bg-[linear-gradient(to_bottom,#d8d8d8,#999)] bg-[length:1px_100%] bg-right bg-no-repeat"
                  )}
                >
                  {c.name}
                </th>
              ))}
            </tr>
          </thead>
          <tbody>
            {ROWS.map((row) => (
              <SheetRow key={row.n} row={row} />
            ))}
          </tbody>
        </table>
      </div>
      <LevelMeter />
      <div className="mr-[3px] ml-[2px] flex w-[25px] shrink-0 flex-col bg-[#dadada]">
        <ScrollButton title="向上滚动" d="M1 9h10L6 3z" />
        <div className="h-[27px] shrink-0 border border-[#777] bg-white" />
        <div className="flex-1" />
        <ScrollButton title="向下滚动" d="M1 3h10L6 9z" />
      </div>
    </div>
  );
}

function SheetTabs() {
  return (
    <div className="flex h-[34px] shrink-0 items-start border-b border-[#c6c6c6] pr-[29px]">
      <div className="flex h-[30px] w-[115px] shrink-0 items-center gap-[27px] pl-[29px]">
        <button type="button" aria-label="上一个工作表">
          <svg width="7" height="12" viewBox="0 0 7 12" fill="#bbb"><path d="M7 0v12L0 6z" /></svg>
        </button>
        <button type="button" aria-label="下一个工作表">
          <svg width="7" height="12" viewBox="0 0 7 12" fill="#bbb"><path d="M0 0v12l7-6z" /></svg>
        </button>
      </div>
      <button type="button" className="h-[29px] shrink-0 border-x border-b-2 border-x-[#999] border-b-[#217346] bg-white px-[11px] pb-[5px] text-[20px] leading-[22px] text-[#217346]">
        电动机保护
      </button>
      <button type="button" aria-label="新工作表" className="mt-1 ml-[37px]">
        <svg width="24" height="24" viewBox="0 0 24 24" fill="none" stroke="#777">
          <circle cx="12" cy="12" r="10.500" />
          <path d="M12 6.500v11M6.500 12h11" strokeWidth="2" />
        </svg>
      </button>
      <div className="ml-auto flex w-[860px] items-center pt-[3px]">
        <div className="flex w-10 shrink-0 flex-col items-center gap-[3px]">
          <i className="size-[3px] bg-[#b0b0b0]" />
          <i className="size-[3px] bg-[#b0b0b0]" />
          <i className="size-[3px] bg-[#b0b0b0]" />
        </div>
        <div className="flex flex-1 bg-[#dadada]">
          <ScrollButton title="向左滚动" d="M9 1v10L3 6z" />
          <div className="h-[25px] flex-1 border border-l-0 border-[#777] bg-white" />
          <div className="w-[39px]" />
          <ScrollButton title="向右滚动" d="M3 1v10l6-5z" />
        </div>
      </div>
    </div>
  );
}

function StatusBar() {
  return (
    <footer className="relative flex h-8 shrink-0 items-center border-b-2 border-[#e9e9e9] bg-[#f3f3f3] pl-[10px] text-[18px] leading-[26px] text-[#262626]">
      <span className="pb-[3px]">就绪</span>
      <svg width="23" height="23" viewBox="0 0 23 23" fill="none" stroke="#444" strokeWidth="1.500" className="ml-[29px]">
        <path d="M8 2a9 9 0 0 0 3 17M9 1v11M5 9l4 4 4-4" />
        <path d="M14 12q0-3 3.500-3t3.500 3-3.500 5v2M17.500 21v2" strokeWidth="2.200" />
      </svg>
      <span className="ml-[2px] pb-[3px]">辅助功能: 不可用</span>

      <div className="ml-auto flex h-full items-center">
        <button type="button" aria-label="普通" className="flex h-full w-[60px] items-center justify-center bg-[#c6c6c6]">
          <svg width="20" height="19" viewBox="0 0 20 19" fill="none" stroke="#666">
            <path d="M.5.500h19v18H.500zM7 0v19M13 0v19M0 6.500h20M0 12.500h20" />
          </svg>
        </button>
        <button type="button" aria-label="页面布局" className="flex w-[60px] justify-center">
          <svg width="20" height="19" viewBox="0 0 20 19" fill="none" stroke="#666">
            <path d="M.5.500h19v18H.500zM4.500 3.500h11v12h-11zM7 6.500h6M7 9.500h6M7 12.500h6" />
          </svg>
        </button>
        <button type="button" aria-label="分页预览" className="flex w-[60px] justify-center">
          <svg width="20" height="19" viewBox="0 0 20 19" fill="none" stroke="#666">
            <path d="M.5.500h19v18H.500zM7 0v11M13.500 0v11M0 11.500h13.500" />
          </svg>
        </button>
        <button type="button" aria-label="缩小" className="ml-2 h-[2px] w-[11px] bg-[#444]" />
        <input
          type="range"
          aria-label="显示比例"
          min="10"
          max="190"
          defaultValue="98"
          className="ml-2 h-4 w-[148px] appearance-none bg-[linear-gradient(#333,#333)] bg-[length:100%_2px] bg-center bg-no-repeat [&::-webkit-slider-thumb]:h-[17px] [&::-webkit-slider-thumb]:w-2 [&::-webkit-slider-thumb]:appearance-none [&::-webkit-slider-thumb]:bg-[#666]"
        />
        <button type="button" aria-label="放大" className="ml-2 h-[2px] w-[11px] bg-[#444]" />
        <span className="mr-[11px] ml-[22px]">100%</span>
      </div>
      <span className="pointer-events-none absolute right-[15px] pb-[5px] text-[20px] text-[#888]/80 [text-shadow:1px_1px_0_#fff]">
        CSDN @工控老马
      </span>
    </footer>
  );
}

export default function App() {
  return (
    <div className="flex h-screen flex-col overflow-hidden bg-[#e6e6e6] font-['Noto_Sans_CJK_SC',sans-serif]">
      <TitleBar />
      <Ribbon />
      <QuickAccess />
      <FormulaBar />
      <Sheet />
      <SheetTabs />
      <StatusBar />
    </div>
  );
}
